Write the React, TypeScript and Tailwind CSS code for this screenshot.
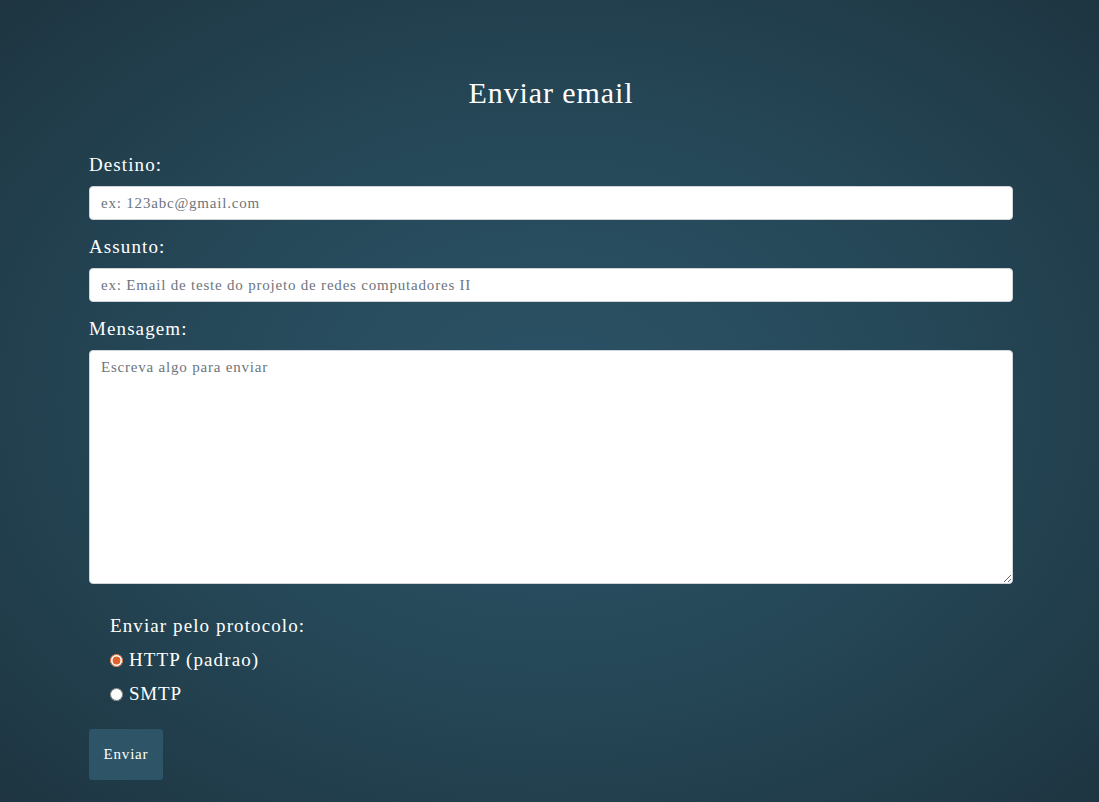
export default function App() {
  return (
    <div
      className="min-h-[802px] w-full bg-[radial-gradient(ellipse_at_center,#2b5366_0%,#264959_45%,#1e3541_100%)] text-white"
      style={{ fontFamily: '"Liberation Serif", "DejaVu Serif", serif' }}
    >
      <div className="ml-[89px] w-[924px] pt-[74px]">
        <h1 className="text-center text-[30px] leading-[38px] tracking-[0.9px]">Enviar email</h1>

        <form className="mt-[40px] flex flex-col">
          <label className="text-[19px] leading-[26px] tracking-[1.1px]">Destino:</label>
          <input
            type="email"
            placeholder="ex: 123abc@gmail.com"
            className="mt-[8px] h-[34px] w-full rounded-[4px] border border-[#ced4da] bg-white px-[11px] text-[15px] tracking-[0.8px] text-[#212529] placeholder:text-[#6c757d] outline-none"
          />

          <label className="mt-[14px] text-[19px] leading-[26px] tracking-[1.1px]">Assunto:</label>
          <input
            type="text"
            placeholder="ex: Email de teste do projeto de redes computadores II"
            className="mt-[8px] h-[34px] w-full rounded-[4px] border border-[#ced4da] bg-white px-[11px] text-[15px] tracking-[0.8px] text-[#212529] placeholder:text-[#6c757d] outline-none"
          />

          <label className="mt-[14px] text-[19px] leading-[26px] tracking-[1.1px]">Mensagem:</label>
          <textarea
            placeholder="Escreva algo para enviar"
            className="mt-[8px] h-[234px] w-full resize-y rounded-[4px] border border-[#ced4da] bg-white px-[11px] py-[5px] text-[15px] tracking-[0.8px] text-[#212529] placeholder:text-[#6c757d] outline-none"
          />

          <div className="mt-[29px] flex flex-col pl-[21px]">
            <span className="text-[19px] leading-[26px] tracking-[1.1px]">Enviar pelo protocolo:</span>
            <label className="mt-[8px] flex items-center gap-[6px] text-[19px] leading-[26px] tracking-[1.1px]">
              <input type="radio" name="proto" defaultChecked className="m-0 h-[13px] w-[13px] accent-[#e0622c]" />
              HTTP (padrao)
            </label>
            <label className="mt-[8px] flex items-center gap-[6px] text-[19px] leading-[26px] tracking-[0.8px]">
              <input type="radio" name="proto" className="m-0 h-[13px] w-[13px] accent-[#e0622c]" />
              SMTP
            </label>
          </div>

          <div className="mt-[22px]">
            <button
              type="button"
              className="h-[51px] w-[74px] rounded-[3px] bg-[#2d5567] text-[15px] tracking-[0.8px] text-white"
            >
              Enviar
            </button>
          </div>
        </form>
      </div>
    </div>
  );
}
